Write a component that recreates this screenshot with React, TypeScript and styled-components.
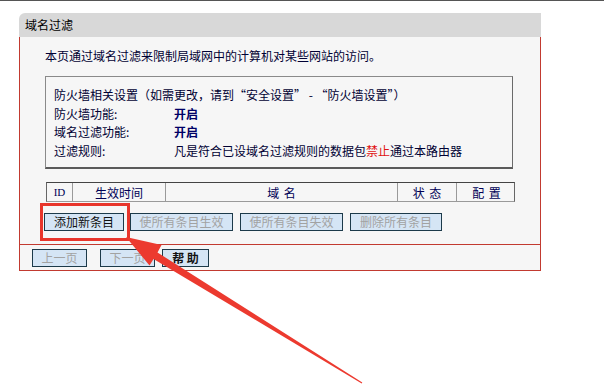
import React from 'react';
import styled, { createGlobalStyle } from 'styled-components';

const GlobalStyle = createGlobalStyle`
  html, body {
    margin: 0;
    padding: 0;
    background: #ffffff;
  }
  body {
    font-family: "Noto Sans CJK SC", "Liberation Sans", sans-serif;
    font-size: 12px;
  }
`;

const Page = styled.div`
  position: relative;
  width: 604px;
  height: 387px;
  overflow: hidden;
  background: #ffffff;
`;

const TopLine = styled.div`
  height: 1px;
  background: #555555;
`;

const Panel = styled.div`
  margin: 12px 0 0 19px;
  width: 522px;
`;

const PanelHeader = styled.div`
  height: 24px;
  line-height: 24px;
  padding-left: 6px;
  background: #d8d8d8;
  border-top-left-radius: 6px;
  color: #000000;
  font-size: 12px;
`;

const PanelBody = styled.div`
  background: #f6f6f6;
  border-left: 1px solid #c23a30;
  border-right: 1px solid #c23a30;
  border-bottom: 1px solid #c23a30;
`;

const MainSection = styled.div`
  padding: 11px 0 13px 25px;
  border-bottom: 1px solid #c23a30;
`;

const Intro = styled.div`
  line-height: 16px;
  color: #000033;
`;

const InfoBox = styled.div`
  margin-top: 12px;
  width: 468px;
  padding: 9px 0 7px 8px;
  box-sizing: border-box;
  border: 1px solid #8a8a8a;
  border-bottom: 2px solid #5a5a5a;
  border-right-color: #6a6a6a;
`;

const InfoRow = styled.div`
  display: grid;
  grid-template-columns: 120px 1fr;
  line-height: 18.5px;
  color: #000033;
`;

const Note = styled.span`
  grid-column: 1 / 3;
`;

const Value = styled.span<{ $bold?: boolean }>`
  font-weight: ${(p) => (p.$bold ? 700 : 400)};
  color: ${(p) => (p.$bold ? '#000066' : '#000033')};
`;

const Forbid = styled.span`
  color: #e01010;
`;

const Table = styled.div`
  margin-top: 13px;
  margin-left: 1px;
  width: 469px;
  display: grid;
  grid-template-columns: 25px 93px 232px 59px 60px;
  height: 20px;
  box-sizing: border-box;
  border-top: 1px solid #444444;
  border-left: 1px solid #666666;
  border-right: 1px solid #666666;
  border-bottom: 1px solid #9a9a9a;
`;

const HeadCell = styled.div<{ $mono?: boolean }>`
  display: flex;
  align-items: center;
  justify-content: center;
  border-left: 1px solid #9a9a9a;
  color: #000055;
  font-family: ${(p) => (p.$mono ? '"Liberation Serif", serif' : 'inherit')};
  font-size: ${(p) => (p.$mono ? '11px' : '12px')};
  word-spacing: 2px;
  &:first-child {
    border-left: none;
  }
`;

const ButtonRow = styled.div`
  display: flex;
  margin-top: 11px;
  margin-left: -1px;
`;

const Btn = styled.button<{ $w: number; $gap?: number; $off?: boolean; $strong?: boolean }>`
  width: ${(p) => p.$w}px;
  height: 18px;
  margin: 0 ${(p) => p.$gap ?? 0}px 0 0;
  padding: 0;
  box-sizing: border-box;
  background: #d5e5f5;
  border: 1px solid #1c3a4a;
  font-family: "Noto Sans CJK SC", "Liberation Sans", sans-serif;
  font-size: 12px;
  line-height: 16px;
  color: ${(p) => (p.$off ? '#a2a2a2' : '#111111')};
  font-weight: ${(p) => (p.$strong ? 700 : 400)};
  white-space: pre;
`;

const NavRow = styled.div`
  display: flex;
  align-items: center;
  height: 25px;
  padding-left: 12px;
`;

const Highlight = styled.div`
  position: absolute;
  left: 40px;
  top: 203px;
  width: 90px;
  height: 38px;
  box-sizing: border-box;
  border: 3px solid #e8352b;
`;

const Overlay = styled.svg`
  position: absolute;
  left: 0;
  top: 0;
  pointer-events: none;
`;

const Arrow: React.FC = () => (
  <Overlay width="604" height="387" viewBox="0 0 604 387">
    <polygon
      points="126,237 161.5,245 157.5,252.5 362.3,382.5 361.7,383.5 153.5,259 149.5,265.5"
      fill="#ec3a2f"
    />
  </Overlay>
);

const App: React.FC = () => {
  return (
    <Page>
      <GlobalStyle />
      <TopLine />
      <Panel>
        <PanelHeader>域名过滤</PanelHeader>
        <PanelBody>
          <MainSection>
            <Intro>本页通过域名过滤来限制局域网中的计算机对某些网站的访问。</Intro>
            <InfoBox>
              <InfoRow>
                <Note>防火墙相关设置（如需更改，请到“安全设置” - “防火墙设置”）</Note>
              </InfoRow>
              <InfoRow>
                <span>防火墙功能:</span>
                <Value $bold>开启</Value>
              </InfoRow>
              <InfoRow>
                <span>域名过滤功能:</span>
                <Value $bold>开启</Value>
              </InfoRow>
              <InfoRow>
                <span>过滤规则:</span>
                <Value>
                  凡是符合已设域名过滤规则的数据包<Forbid>禁止</Forbid>通过本路由器
                </Value>
              </InfoRow>
            </InfoBox>
            <Table>
              <HeadCell $mono>ID</HeadCell>
              <HeadCell>生效时间</HeadCell>
              <HeadCell>域 名</HeadCell>
              <HeadCell>状 态</HeadCell>
              <HeadCell>配 置</HeadCell>
            </Table>
            <ButtonRow>
              <Btn $w={80} $gap={6}>添加新条目</Btn>
              <Btn $w={103} $gap={7} $off>使所有条目生效</Btn>
              <Btn $w={103} $gap={7} $off>使所有条目失效</Btn>
              <Btn $w={92} $off>删除所有条目</Btn>
            </ButtonRow>
          </MainSection>
          <NavRow>
            <Btn $w={55} $gap={13} $off>上一页</Btn>
            <Btn $w={55} $gap={7} $off>下一页</Btn>
            <Btn $w={47} $strong>帮 助</Btn>
          </NavRow>
        </PanelBody>
      </Panel>
      <Highlight />
      <Arrow />
    </Page>
  );
};

export default App;
